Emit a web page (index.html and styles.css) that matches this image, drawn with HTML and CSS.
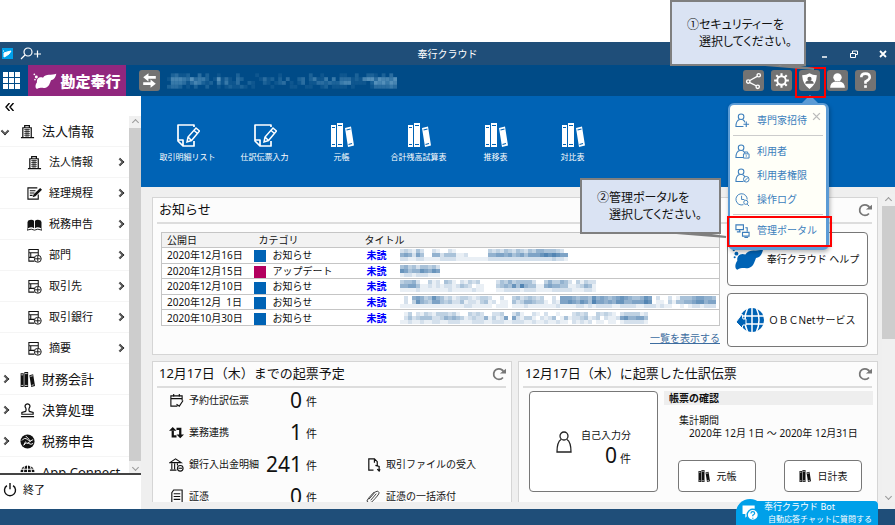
FILE: index.html
```html
<!DOCTYPE html>
<html lang="ja">
<head>
  <meta charset="UTF-8">
  <meta name="viewport" content="width=device-width, initial-scale=1.0">
  <title>奉行クラウド</title>
  <link rel="stylesheet" href="styles.css">
</head>
<body>
  <!-- アイコン -->
  <svg class="sprite" aria-hidden="true">
    <symbol id="i-building" viewBox="0 0 16 16"><path d="M3 14V4h9v10M5 4V1.700h5V4M1 14.500h14" fill="none" stroke="currentColor" stroke-width="1.300"/><path d="M4.500 6h6M4.500 8h6M4.500 10h6M4.500 12h6M6.500 5v9M8.500 5v9" stroke="currentColor" stroke-width=".8"/></symbol>
    <symbol id="i-edit" viewBox="0 0 16 16"><path d="M12 9v5H1V2h10M3 5h6M3 7.500h5M3 10h3" fill="none" stroke="currentColor" stroke-width="1.200"/><path d="M14 2l2 2-7 7-3 1 1-3z" fill="currentColor"/></symbol>
    <symbol id="i-book" viewBox="0 0 16 16"><path d="M1 4q4-2 6.500 0v8Q5 10 1 12zM8.500 4Q11 2 15 4v8q-4-2-6.500 0z" fill="currentColor"/><path d="M0 5v9q5-2 8 0 3-2 8 0V5" fill="none" stroke="currentColor"/></symbol>
    <symbol id="i-list" viewBox="0 0 16 16"><path d="M8 14H2v-4h8M2 1.500h10v3.500H2zM2 5v5M12 5v3M2 5h2v5" fill="none" stroke="currentColor" stroke-width="1.100"/><circle cx="11.500" cy="11.500" r="3.700" fill="#fff" stroke="currentColor"/><path d="M8.500 11.500h6M11.500 8.500v6" stroke="currentColor"/></symbol>
    <symbol id="i-books" viewBox="0 0 24 24"><path d="M1 2h5v22H1zM7 0h6v24H7zM15 5l6-1.500 3 19-6 1.500z" fill="currentColor"/><path class="cut" d="M2 4.500h3M2 21.500h3M8 2.500h4M8 21.500h4M16.500 7l4-1M18.500 21.500l3.500-1" stroke-width="1.200"/></symbol>
    <symbol id="i-stamp" viewBox="0 0 16 16"><path d="M6 9q1-2 0-4a2.500 2.500 0 1 1 4 0q-1 2 0 4l4 1v2H2v-2zM1 14.500h14" fill="none" stroke="currentColor" stroke-width="1.300"/></symbol>
    <symbol id="i-tax" viewBox="0 0 16 16"><circle cx="8" cy="8" r="7.500" fill="currentColor"/><path d="M2 7q3-4 6-1t6 0M4 12q2-4 5-2t5 0M6 2l4 4M6 8l-2 4M8 10l4-3" fill="none" stroke="#fff" stroke-width="1"/></symbol>
    <symbol id="i-globe" viewBox="0 0 16 16"><circle cx="8" cy="8" r="7.500" fill="currentColor"/><path d="M8 0v16M0 8h16M1 4.500h14M1 11.500h14M5.500 0Q2 8 5.500 16M10.500 0Q14 8 10.500 16" fill="none" stroke="#fff"/></symbol>
    <symbol id="i-power" viewBox="0 0 16 16"><path d="M4.500 3a6.300 6.300 0 1 0 7 0M8 0v7" fill="none" stroke="currentColor" stroke-width="1.600"/></symbol>
    <symbol id="i-note" viewBox="0 0 24 24"><path d="M18 4V2H2v16l5 5h11v-5M2 17h5v6" fill="none" stroke="currentColor" stroke-width="1.700" stroke-linejoin="round"/><path d="M20 5l3.500 3-8 9.500-4.500 1.500 1-5zM18 7.500l3 2.500M12 14l3 3" fill="none" stroke="currentColor" stroke-width="1.500"/></symbol>
    <symbol id="i-reload" viewBox="0 0 16 16"><path d="M12.500 12a6 6 0 1 1 1-6" fill="none" stroke="currentColor" stroke-width="2"/><path d="M9 7.500h7V2z" fill="currentColor"/></symbol>
    <symbol id="i-phoenix" viewBox="0 0 36 26"><path d="M6 15C5 9 10 6 15 8 19 1 28 5 35 2c-1 5-3 9-8 10-2 5-3 10-8 11-4 1-8-1-13 2-3-1-3-6 0-10z" fill="currentColor"/><circle cx="5" cy="7" r="2.200" fill="currentColor"/><circle cx="2" cy="3" r="1.300" fill="currentColor"/><circle cx="3" cy="11" r="1.200" fill="currentColor"/></symbol>
    <symbol id="i-user" viewBox="0 0 16 16"><circle cx="6.500" cy="4" r="3" fill="none" stroke="currentColor" stroke-width="1.100"/><path d="M5 7Q1 8 1 14.500h8M8 7q2 1 2.500 3" fill="none" stroke="currentColor" stroke-width="1.100"/></symbol>
  </svg>

  <header class="titlebar">
    <div class="titlebar-left">
      <svg class="app-icon" viewBox="0 0 11 11"><rect width="11" height="11" fill="#00a0e9"/><path d="M2 5l3-1 4-1-2 3-3 2-2 1zM1 3h1" fill="#fff" stroke="#fff"/></svg>
      <button class="plain" aria-label="検索">
        <svg class="search-icon" viewBox="0 0 22 14"><circle cx="8" cy="5" r="4" fill="none" stroke="#fff" stroke-width="1.200"/><path d="M5 8l-4 4M14 7h7M17.500 3.500v7" fill="none" stroke="#fff" stroke-width="1.200"/></svg>
      </button>
    </div>
    <h1 class="titlebar-name">奉行クラウド</h1>
    <div class="window-buttons">
      <button class="plain" aria-label="最小化"><svg viewBox="0 0 8 8"><path d="M1 7h5" stroke="#fff" stroke-width="1.500"/></svg></button>
      <button class="plain" aria-label="元に戻す"><svg viewBox="0 0 8 8"><path d="M2.500 3V1h5v3.500H6M.5 3.500h5v4h-5z" fill="none" stroke="#fff"/></svg></button>
      <button class="plain" aria-label="閉じる"><svg viewBox="0 0 8 8"><path d="M1 1l6 6M7 1L1 7" stroke="#fff" stroke-width="1.800"/></svg></button>
    </div>
  </header>

  <div class="header">
    <button class="plain" aria-label="メニュー">
      <svg class="apps-icon" viewBox="0 0 17 17" fill="#fff"><path d="M0 0h5v5H0zM6 0h5v5H6zM12 0h5v5h-5zM0 6h5v5H0zM6 6h5v5H6zM12 6h5v5h-5zM0 12h5v5H0zM6 12h5v5H6zM12 12h5v5h-5z"/></svg>
    </button>
    <a class="brand" href="#"><svg><use href="#i-phoenix"/></svg>勘定奉行</a>
    <button class="tool" aria-label="切り替え"><svg viewBox="0 0 20 20"><path d="M16 7H8M4 13h8" stroke="#fff" stroke-width="2.600"/><path d="M9 3v8L4 7zM11 9v8l5-4z" fill="#fff"/></svg></button>
    <svg class="mosaic mosaic-name" data-color="#9ccbe6" data-rows="023112003020010000200001000001000000020010000110020022102030;155543634420161310320000131202030023024114040333121566365546;044431354212041411300210021012301013011332322455111102656465;233201020020010121121010000100001100110012011110100001333343"></svg>
    <div class="tools">
      <button class="tool" aria-label="共有"><svg viewBox="0 0 20 20" fill="none" stroke="#fff" stroke-width="1.300"><circle cx="5" cy="11" r="1.600"/><circle cx="15" cy="5" r="1.600"/><circle cx="14" cy="16" r="1.600"/><path d="M6.500 10l7-4M6.500 12l6 3"/></svg></button>
      <button class="tool" aria-label="設定"><svg viewBox="0 0 20 20" fill="none" stroke="#fff"><circle cx="10" cy="10" r="4" stroke-width="1.800"/><path d="M10 3v3M10 14v3M3 10h3M14 10h3M5 5l2 2M13 13l2 2M15 5l-2 2M5 15l2-2" stroke-width="2"/></svg></button>
      <button class="tool" aria-label="セキュリティー"><svg viewBox="0 0 20 20"><path d="M10 3q3 2 7 2-.5 9-7 13Q3.500 14 3 5q4 0 7-2z" fill="#fff"/><circle cx="10" cy="8.500" r="2" fill="#666"/><path d="M6 13q0-3 4-3t4 3z" fill="#666"/></svg></button>
      <button class="tool" aria-label="ユーザー"><svg viewBox="0 0 20 20" fill="#fff"><circle cx="10" cy="7" r="4"/><path d="M3 17q0-5 5-6 2 1 4 0 5 1 5 6z"/></svg></button>
      <button class="tool" aria-label="ヘルプ"><svg viewBox="0 0 20 20"><path d="M6 7q0-3.500 4-3.500t4 3.300q0 2-4 4.200V13" fill="none" stroke="#fff" stroke-width="2.500"/><path d="M8.700 14.500h2.600V17H8.700z" fill="#fff"/></svg></button>
    </div>
  </div>

  <div class="main">
    <nav class="sidebar">
      <button class="plain collapse" aria-label="折りたたむ"><svg viewBox="0 0 10 8"><path d="M4.500 0L1 4l3.500 4M8.500 0L5 4l3.500 4" fill="none" stroke="#000" stroke-width="1.400"/></svg></button>
      <div class="menu-wrap">
        <ul class="menu">
          <li><a class="group open" href="#"><svg><use href="#i-building"/></svg>法人情報</a></li>
          <li><a class="sub" href="#"><svg><use href="#i-building"/></svg>法人情報</a></li>
          <li><a class="sub" href="#"><svg><use href="#i-edit"/></svg>経理規程</a></li>
          <li><a class="sub" href="#"><svg><use href="#i-book"/></svg>税務申告</a></li>
          <li><a class="sub" href="#"><svg><use href="#i-list"/></svg>部門</a></li>
          <li><a class="sub" href="#"><svg><use href="#i-list"/></svg>取引先</a></li>
          <li><a class="sub" href="#"><svg><use href="#i-list"/></svg>取引銀行</a></li>
          <li><a class="sub" href="#"><svg><use href="#i-list"/></svg>摘要</a></li>
          <li><a class="group" href="#"><svg><use href="#i-books"/></svg>財務会計</a></li>
          <li><a class="group" href="#"><svg><use href="#i-stamp"/></svg>決算処理</a></li>
          <li><a class="group" href="#"><svg><use href="#i-tax"/></svg>税務申告</a></li>
          <li><a class="group leaf" href="#"><svg><use href="#i-globe"/></svg>App Connect</a></li>
        </ul>
        <div class="scrollbar"><span class="arrow up"></span><span class="thumb"></span><span class="arrow down"></span></div>
      </div>
      <button class="plain exit"><svg><use href="#i-power"/></svg>終了</button>
    </nav>

    <main class="content">
      <div class="shortcuts">
        <a href="#"><svg><use href="#i-note"/></svg>取引明細リスト</a>
        <a href="#"><svg><use href="#i-note"/></svg>仕訳伝票入力</a>
        <a href="#"><svg><use href="#i-books"/></svg>元帳</a>
        <a href="#"><svg><use href="#i-books"/></svg>合計残高試算表</a>
        <a href="#"><svg><use href="#i-books"/></svg>推移表</a>
        <a href="#"><svg><use href="#i-books"/></svg>対比表</a>
      </div>

      <div class="board">
        <div class="panels">
          <section class="panel wide">
            <div class="panel-head"><h2>お知らせ</h2><button class="plain" aria-label="更新"><svg><use href="#i-reload"/></svg></button></div>
            <div class="news">
              <div class="news-main">
                <table>
                  <thead><tr><th class="c-date">公開日</th><th class="c-cat">カテゴリ</th><th class="c-state">タイトル</th><th></th></tr></thead>
                  <tbody>
                    <tr><td>2020年12月16日</td><td><i class="mark"></i>お知らせ</td><td class="unread">未読</td><td><svg class="mosaic" data-color="#2866a0" data-rows="232142002100210000000032324324324355444320;565264005524441120000055665645646667878766;221122111122221111111122222222222222223221"></svg></td></tr>
                    <tr><td>2020年12月15日</td><td><i class="mark update"></i>アップデート</td><td class="unread">未読</td><td><svg class="mosaic" data-color="#2866a0" data-rows="4534244342;7645576576;1221222111"></svg></td></tr>
                    <tr><td>2020年12月10日</td><td><i class="mark"></i>お知らせ</td><td class="unread">未読</td><td><svg class="mosaic" data-color="#2866a0" data-rows="3445200312043102132300002435344442003533542031322;5566411212122124320110003454748544115655441123541;1111211111112111112110001122221222111122222111221"></svg></td></tr>
                    <tr><td>2020年12月&ensp;1日</td><td><i class="mark"></i>お知らせ</td><td class="unread">未読</td><td><svg class="mosaic" data-color="#2866a0" data-rows="0205653475423123321233200200342343230020666545547565456765445760200201444566554;0203754366434224122134120110423554331021667657648665657755666870110314455677566;1111111111111111221111101110111211111112111122121222211222211222121100101221222"></svg></td></tr>
                    <tr><td>2020年10月30日</td><td><i class="mark"></i>お知らせ</td><td class="unread">未読</td><td><svg class="mosaic" data-color="#2866a0" data-rows="01302132133323100323200223002410021020010002323003232102333312;02423444223545431232251312606213310212401412234123021126755664;11211211221122211122211222112221121121121102121201101101222221"></svg></td></tr>
                  </tbody>
                </table>
                <a class="more" href="#">一覧を表示する</a>
              </div>
              <div class="news-side">
                <button class="box help"><svg><use href="#i-phoenix"/></svg>奉行クラウド ヘルプ</button>
                <button class="box net"><svg viewBox="0 0 28 26"><circle cx="16" cy="13" r="12" fill="#0063b5"/><path d="M16 0v26M3 9h26M3 17h26M12 0Q6 13 12 26M20 0q6 13 0 26" fill="none" stroke="#fff" stroke-width="1.500"/><path d="M0 15l6-8 1 5h3v6H7l-1 3z" fill="#0063b5" stroke="#fff"/></svg>ＯＢＣNetサービス</button>
              </div>
            </div>
          </section>

          <section class="panel">
            <div class="panel-head"><h2>12月17日（木）までの起票予定</h2><button class="plain" aria-label="更新"><svg><use href="#i-reload"/></svg></button></div>
            <div class="plan">
              <svg viewBox="0 0 16 16" fill="none" stroke="#111" stroke-width="1.200"><path d="M9 14H2V3h12v5M2 6h12M5 1v3M11 1v3M8 12l3 2 4-6"/></svg>
              <a href="#">予約仕訳伝票</a><b>0</b><span>件</span><i></i><i></i>
              <svg viewBox="0 0 16 16"><path d="M4 6v6h4M12 11V4H8" fill="none" stroke="#111" stroke-width="2.400"/><path d="M0 6l4-4 4 4zM8 10h8l-4 4z" fill="#111"/></svg>
              <a href="#">業務連携</a><b>1</b><span>件</span><i></i><i></i>
              <svg viewBox="0 0 16 16" fill="none" stroke="#111" stroke-width="1.200"><path d="M1 6l6-4 6 4zM3 7v6M6 7v6M9 7v2M1 14h7"/><circle cx="12" cy="12" r="3"/><path d="M10 12h4"/></svg>
              <a href="#">銀行入出金明細</a><b>241</b><span>件</span>
              <svg viewBox="0 0 16 16" fill="none" stroke="#111" stroke-width="1.300"><path d="M8 14H3V2h6l3 3v5M9 2v4M10 9l4 1v5M12 13l2 2 1-2"/></svg>
              <a href="#">取引ファイルの受入</a>
              <svg viewBox="0 0 16 16" fill="none" stroke="#111" stroke-width="1.200"><path d="M5 1h9v14H3V4zM5 5h7M5 8h7M5 11h7"/></svg>
              <a href="#">証憑</a><b>0</b><span>件</span>
              <svg viewBox="0 0 16 16" fill="none" stroke="#333"><path d="M3 11l7-8q3-2 4 1 0 2-8 10-3 2-5-1 0-2 8-10M5 12l6-7"/></svg>
              <a href="#">証憑の一括添付</a>
            </div>
          </section>

          <section class="panel">
            <div class="panel-head"><h2>12月17日（木）に起票した仕訳伝票</h2><button class="plain" aria-label="更新"><svg><use href="#i-reload"/></svg></button></div>
            <div class="slips">
              <button class="box self">
                <svg viewBox="0 0 16 22" fill="none" stroke="#222" stroke-width="1.300"><circle cx="8" cy="5" r="4"/><path d="M5 8.500Q1 11 1 21h14q0-10-4-12.500"/></svg>
                <span class="self-text">自己入力分<span class="self-count"><b>0</b> 件</span></span>
              </button>
              <div class="reports">
                <h3>帳票の確認</h3>
                <p>集計期間</p>
                <p class="period">2020年 12月 1日 ～ 2020年 12月31日</p>
                <div class="report-buttons">
                  <button class="box"><svg><use href="#i-books"/></svg>元帳</button>
                  <button class="box"><svg><use href="#i-books"/></svg>日計表</button>
                </div>
              </div>
            </div>
          </section>
        </div>
        <div class="scrollbar board-scroll"><span class="arrow up"></span><span class="thumb"></span><span class="arrow down"></span></div>
      </div>
    </main>
  </div>

  <footer class="footer"></footer>

  <button class="bot">
    <svg viewBox="0 0 30 30"><path d="M7 7h13v9h-6l-4 4v-4H7z" fill="#fff"/><circle cx="18" cy="17" r="6" fill="#fff" stroke="#00a0e9" stroke-width="1.500"/><path d="M16 15.500q0-2 2-2t2 1.700q0 1-2 2.300v1M18 20v1.200" fill="none" stroke="#00a0e9" stroke-width="1.300"/></svg>
    <span>奉行クラウド Bot<small>自動応答チャットに質問する</small></span>
  </button>

  <!-- セキュリティーメニュー -->
  <div class="popup">
    <button class="plain popup-close" aria-label="閉じる"><svg viewBox="0 0 8 8"><path d="M1 1l6 6M7 1L1 7" stroke="#bbb" stroke-width="1.200"/></svg></button>
    <a href="#"><svg viewBox="0 0 16 16"><use href="#i-user"/><path d="M12 9v6M9 12h6" stroke="currentColor" stroke-width="1.200"/></svg>専門家招待</a>
    <hr>
    <a href="#"><svg viewBox="0 0 16 16"><use href="#i-user"/><path d="M9 10.500h6V15H9zM10.500 10V8.500h3V10M12 12v1.500" fill="#fffff8" stroke="currentColor"/></svg>利用者</a>
    <a href="#"><svg viewBox="0 0 16 16"><use href="#i-user"/><circle cx="12" cy="12" r="3" fill="#fffff8" stroke="currentColor"/><path d="M10 14l4-4" stroke="currentColor"/></svg>利用者権限</a>
    <a href="#"><svg viewBox="0 0 16 16" fill="none" stroke="currentColor"><path d="M9 13.500A6 6 0 1 1 13 8M7 4v4h3"/><circle cx="11.500" cy="11" r="2.200"/><path d="M13 13l2 2"/></svg>操作ログ</a>
    <hr>
    <a href="#"><svg viewBox="0 0 16 16" fill="none" stroke="currentColor" stroke-width="1.200"><path d="M1 2h8v5H1zM8 10h7v4H8zM5 7v2M2 9.500h4M10 15.500h4M11 5h2v4"/></svg>管理ポータル</a>
  </div>
  <div class="mark-box mark-security"></div>
  <div class="mark-box mark-portal"></div>

  <div class="callout callout-1">①セキュリティーを<br>　選択してください。
    <svg class="tail" viewBox="0 0 66 8"><path d="M2 0L62 5 28 0z" fill="#dae3f3" stroke="#7f7f7f" stroke-width="2"/></svg>
  </div>
  <div class="callout callout-2">②管理ポータルを<br>　選択してください。
    <svg class="tail" viewBox="0 0 66 8"><path d="M2 0L64 5 28 0z" fill="#dae3f3" stroke="#7f7f7f" stroke-width="2"/></svg>
  </div>

  <script src="mosaic.js"></script>
</body>
</html>
```

FILE: mosaic.js
```js
// 数字 0-9 を濃さとして 4px のマスを描く
var cell = 4;

document.querySelectorAll('.mosaic').forEach(function(svg) {
  var rows = svg.dataset.rows.split(';');
  var width = rows[0].length * cell;
  var height = rows.length * cell;
  svg.setAttribute('width', width);
  svg.setAttribute('height', height);
  svg.setAttribute('viewBox', '0 0 ' + width + ' ' + height);
  rows.forEach(function(row, y) {
    row.split('').forEach(function(n, x) {
      var rect = document.createElementNS('http://www.w3.org/2000/svg', 'rect');
      rect.setAttribute('x', x * cell);
      rect.setAttribute('y', y * cell);
      rect.setAttribute('width', cell);
      rect.setAttribute('height', cell);
      rect.setAttribute('fill', svg.dataset.color);
      rect.setAttribute('fill-opacity', n / 10);
      svg.appendChild(rect);
    });
  });
});
```

FILE: styles.css
```css
* {
  box-sizing: border-box;
}
body {
  margin: 0;
  padding-top: 42px;
  height: 100vh;
  display: flex;
  flex-direction: column;
  overflow: hidden;
  position: relative;
  background: #fff;
  color: #111;
  font: 10px/16px "Noto Sans", "Noto Sans CJK JP", sans-serif;
  --cut: #fff;
}
h1, h2, h3, p, ul {
  margin: 0;
  padding: 0;
  font-weight: normal;
}
a {
  color: inherit;
  text-decoration: none;
}
button {
  font: inherit;
  color: inherit;
  cursor: pointer;
}
svg {
  display: block;
  flex: none;
}
.sprite {
  position: absolute;
  width: 0;
  height: 0;
}
.cut {
  stroke: var(--cut);
}
.plain {
  border: 0;
  padding: 0;
  background: none;
}

/* タイトルバー */
.titlebar {
  flex: none;
  height: 23px;
  display: grid;
  grid-template-columns: 1fr auto 1fr;
  align-items: center;
  background: #1f4e79;
  color: #fff;
}
.titlebar-left {
  display: flex;
  align-items: center;
  gap: 7px;
  padding-left: 2px;
}
.app-icon {
  width: 11px;
  height: 11px;
}
.search-icon {
  width: 22px;
  height: 14px;
}
.titlebar-name {
  font-size: 10px;
}
.window-buttons {
  display: flex;
  justify-content: flex-end;
  gap: 21px;
  padding-right: 8px;
}
.window-buttons svg {
  width: 8px;
  height: 8px;
}

/* ヘッダー */
.header {
  flex: none;
  height: 31px;
  display: flex;
  align-items: center;
  padding: 0 19px 0 3px;
  background: #004b87;
}
.apps-icon {
  width: 17px;
  height: 17px;
}
.brand {
  align-self: stretch;
  width: 98px;
  margin: 0 13px 0 8px;
  display: flex;
  align-items: center;
  justify-content: center;
  gap: 3px;
  background: #91277e;
  color: #fff;
  font-size: 15px;
  font-weight: 900;
}
.brand svg {
  width: 24px;
  height: 18px;
}
.tool {
  width: 21px;
  height: 21px;
  padding: 0;
  border: 0;
  border-radius: 3px;
  background: #737373;
}
.tool svg {
  width: 21px;
  height: 21px;
}
.mosaic-name {
  margin-left: 7px;
  width: 230px;
  opacity: 0.9;
}
.tools {
  display: flex;
  gap: 7px;
  margin-left: auto;
}

.main {
  flex: 1;
  min-height: 0;
  display: grid;
  grid-template-columns: 141px 1fr;
  grid-template-rows: 100%;
  background: #efefef;
}

/* サイドバー */
.sidebar {
  display: flex;
  flex-direction: column;
  background: #fff;
}
.collapse {
  height: 20px;
  padding: 2px 0 0 5px;
}
.collapse svg {
  width: 10px;
  height: 8px;
}
.menu-wrap {
  flex: 1;
  min-height: 0;
  display: flex;
  overflow: hidden;
}
.menu {
  flex: 1;
  list-style: none;
}
.menu li {
  height: 31px;
  border-bottom: 1px solid #f5f5f5;
}
.menu a {
  height: 30px;
  display: flex;
  align-items: center;
  white-space: nowrap;
}
.menu svg {
  width: 15px;
  height: 15px;
}
.menu a::before,
.sub::after {
  content: "";
  flex: none;
  width: 5px;
  height: 5px;
  border: solid #111;
  border-width: 1px 1px 0 0;
  outline: 0;
  box-shadow: inset -1px 1px 0 #555;
  transform: rotate(45deg);
}
.group {
  gap: 7px;
  padding-left: 3px;
  font-size: 13px;
}
.group svg {
  margin-left: 5px;
}
.menu .group {
  padding-left: 2px;
}
.menu a.open::before {
  transform: rotate(135deg);
}
.menu a.leaf::before {
  visibility: hidden;
}
.menu .sub::before {
  display: none;
}
.sub {
  gap: 7px;
  padding: 0 6px 0 27px;
  font-size: 11px;
}
.sub::after {
  margin-left: auto;
}
.scrollbar {
  width: 12px;
  display: flex;
  flex-direction: column;
  background: #f0f0f0;
}
.thumb {
  flex: 1;
  background: #cdcdcd;
}
.arrow {
  height: 12px;
  display: grid;
  place-items: center;
}
.arrow::before {
  content: "";
  width: 4px;
  height: 4px;
  border: solid #999;
  border-width: 1px 0 0 1px;
  transform: rotate(45deg);
}
.arrow.down::before {
  transform: rotate(225deg);
}
.exit {
  height: 36px;
  display: flex;
  align-items: center;
  gap: 6px;
  padding: 0 0 4px 3px;
  border-top: 2px solid #444;
  font-size: 11px;
}
.exit svg {
  width: 14px;
  height: 14px;
}

/* ショートカット */
.content {
  min-width: 0;
  display: flex;
  flex-direction: column;
  padding-bottom: 7px;
}
.shortcuts {
  flex: none;
  height: 91px;
  display: flex;
  padding: 27px 0 0 8px;
  background: #0063b5;
  color: #fff;
  --cut: #0063b5;
}
.shortcuts a {
  width: 77px;
  display: flex;
  flex-direction: column;
  align-items: center;
  gap: 2px;
  font-size: 8px;
}
.shortcuts svg {
  width: 24px;
  height: 24px;
}

/* パネル */
.board {
  flex: 1;
  min-height: 0;
  display: flex;
  gap: 4px;
  padding-left: 11px;
  overflow: hidden;
}
.panels {
  flex: 1;
  min-width: 0;
  display: grid;
  grid-template-columns: 1fr 1fr;
  align-content: start;
  gap: 6px;
  padding-top: 10px;
}
.board-scroll {
  width: 13px;
  margin-top: 7px;
}
.board-scroll .thumb {
  flex: none;
  height: 133px;
}
.board-scroll .down {
  margin-top: auto;
}
.panel {
  min-width: 0;
  min-height: 158px;
  border: 1px solid #d5d5d5;
  background: #fcfcfc;
}
.wide {
  grid-column: 1 / -1;
}
.panel-head {
  height: 26px;
  display: flex;
  align-items: center;
  justify-content: space-between;
  margin: 0 5px 0 4px;
  padding: 0 0 3px 2px;
  border-bottom: 2px solid #ddd;
}
.panel-head h2 {
  font-size: 13px;
}
.panel-head svg {
  width: 14px;
  height: 14px;
  margin-top: 3px;
  color: #777;
}
.box {
  display: flex;
  align-items: center;
  justify-content: center;
  border: 1px solid #777;
  border-radius: 4px;
  background: #fff;
  white-space: nowrap;
}

/* お知らせ */
.news {
  display: grid;
  grid-template-columns: 1fr 141px;
  gap: 7px;
  padding: 8px 9px 7px 8px;
}
.news-main {
  min-width: 0;
}
table {
  width: 100%;
  height: 94px;
  table-layout: fixed;
  border-collapse: collapse;
  border: 1px solid #c5c5c5;
  background: #fff;
}
tr {
  border-bottom: 1px solid #c5c5c5;
}
thead {
  background: #f2f2f2;
}
th, td {
  height: 15px;
  padding: 0 0 0 5px;
  line-height: 14px;
  font-weight: normal;
  text-align: left;
  white-space: nowrap;
}
.c-date {
  width: 92px;
}
.c-cat {
  width: 106px;
}
.c-state {
  width: 40px;
}
td:nth-child(2) {
  padding-left: 0;
}
.mark {
  display: inline-block;
  width: 12px;
  height: 12px;
  margin-right: 7px;
  vertical-align: middle;
  background: #0063b5;
}
.mark.update {
  background: #b4005f;
}
.unread {
  color: #0000ff;
  font-weight: bold;
  padding-left: 7px;
}
td .mosaic {
  max-width: 100%;
}
td:last-child {
  padding-left: 0;
}
.more {
  display: block;
  margin-top: 4px;
  text-align: right;
  color: #3d6da0;
  text-decoration: underline;
}
.news-side {
  display: grid;
  gap: 7px;
  grid-template-rows: 54px 54px;
}
.help,
.net {
  padding: 0;
}
.help {
  gap: 3px;
  padding-right: 4px;
}
.help svg {
  width: 32px;
  height: 24px;
  color: #0063b5;
}
.net {
  gap: 5px;
  padding-right: 4px;
}
.net svg {
  width: 28px;
  height: 26px;
}

/* 起票予定 */
.plan {
  display: grid;
  grid-template-columns: 20px 70px 43px 64px 20px 1fr;
  grid-auto-rows: 24px;
  row-gap: 8px;
  align-items: center;
  padding: 0 0 0 16px;
  height: 124px;
  white-space: nowrap;
}
.plan svg {
  width: 15px;
  height: 15px;
}
.plan b {
  text-align: right;
}
.plan b,
.self b {
  font-size: 21px;
  font-weight: normal;
}
.plan span {
  padding: 4px 0 0 4px;
  font-size: 11px;
}

/* 仕訳伝票 */
.slips {
  display: grid;
  grid-template-columns: 129px 1fr;
  gap: 6px;
  padding: 3px 4px 0 10px;
}
.self {
  height: 101px;
  gap: 9px;
  padding: 0;
}
.self svg {
  width: 16px;
  height: 22px;
}
.self-text {
  display: flex;
  flex-direction: column;
  padding-top: 14px;
}
.self-count {
  text-align: right;
  font-size: 11px;
  line-height: 24px;
}
.reports h3 {
  padding-left: 5px;
  background: #eee;
  font-size: 10px;
  line-height: 14px;
  font-weight: bold;
}
.reports p {
  padding-left: 15px;
  line-height: 13px;
}
.reports h3 + p {
  margin-top: 9px;
}
.reports .period {
  padding-left: 25px;
  white-space: nowrap;
}
.report-buttons {
  display: flex;
  gap: 28px;
  margin: 20px 0 0 14px;
}
.report-buttons .box {
  width: 78px;
  height: 32px;
  gap: 7px;
  padding: 0;
}
.report-buttons svg {
  width: 12px;
  height: 12px;
}

.footer {
  flex: none;
  height: 16px;
  background: #1f4e79;
}
.bot {
  position: absolute;
  right: 17px;
  bottom: 0;
  height: 24px;
  display: flex;
  align-items: center;
  padding: 0 6px 0 0;
  border: 0;
  border-radius: 12px 4px 0 0;
  background: #00a0e9;
  color: #fff;
  font-size: 9px;
  line-height: 12px;
  text-align: left;
}
.bot svg {
  width: 28px;
  height: 28px;
  border-radius: 50%;
  background: #00a0e9;
}
.bot small {
  display: block;
  padding-left: 4px;
  font-size: 8px;
}

/* ポップアップ */
.popup {
  position: absolute;
  top: 103px;
  right: 66px;
  width: 101px;
  padding: 3px 3px 5px;
  border: 2px solid #5b9bd5;
  border-right-width: 3px;
  border-bottom-width: 3px;
  border-radius: 6px;
  background: #fffff8;
  color: #3c7ebc;
  box-shadow: 1px 2px 4px rgba(0, 0, 0, 0.3);
}
.popup::before {
  content: "";
  position: absolute;
  top: -10px;
  left: 72px;
  border: solid transparent;
  border-width: 0 8px 8px;
  border-bottom-color: #5b9bd5;
}
.popup a {
  height: 24px;
  display: flex;
  align-items: center;
  gap: 7px;
  padding-left: 2px;
  white-space: nowrap;
}
.popup svg {
  width: 15px;
  height: 15px;
}
.popup hr {
  margin: 3px 0;
  border: 0;
  border-top: 1px solid #ccc;
}
.popup-close {
  position: absolute;
  top: 7px;
  right: 5px;
}
.popup .popup-close svg {
  width: 9px;
  height: 9px;
}

/* 説明 */
.mark-box {
  position: absolute;
  border: 2px solid #f00;
}
.mark-security {
  top: 67px;
  right: 69px;
  width: 31px;
  height: 31px;
}
.mark-portal {
  top: 216px;
  right: 63px;
  width: 105px;
  height: 31px;
}
.callout {
  position: absolute;
  padding: 14px 0 0 15px;
  border: 2px solid #7f7f7f;
  background: #dae3f3;
  font-size: 12px;
  line-height: 17px;
  font-feature-settings: "palt";
  white-space: nowrap;
}
.callout-1 {
  top: 0;
  right: 89px;
  width: 136px;
  height: 66px;
}
.callout-2 {
  top: 178px;
  right: 174px;
  width: 141px;
  height: 56px;
  padding-top: 9px;
}
.tail {
  position: absolute;
  top: 100%;
  left: 80px;
  width: 66px;
  height: 8px;
}
```
